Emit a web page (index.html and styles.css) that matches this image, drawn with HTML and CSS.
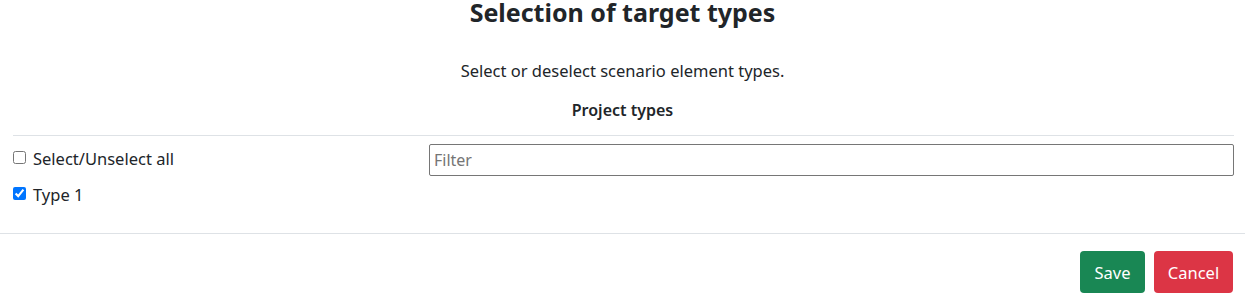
FILE: index.html
```html
<!DOCTYPE html>
<html lang="en">
<head>
<meta charset="utf-8">
<title>Selection of target types</title>
<link rel="stylesheet" href="styles.css">
</head>
<body>
<div class="modal">
  <h3 class="title">Selection of target types</h3>
  <p class="desc">Select or deselect scenario element types.</p>
  <p class="subhead">Project types</p>
  <div class="content">
    <hr class="rule">
    <div class="row">
      <div class="checks">
        <label class="check"><input type="checkbox"><span>Select/Unselect all</span></label>
        <label class="check"><input type="checkbox" checked><span>Type 1</span></label>
      </div>
      <div class="filter-col">
        <input class="filter" type="text" placeholder="Filter">
      </div>
    </div>
  </div>
  <div class="footer">
    <button class="btn btn-save" type="button">Save</button>
    <button class="btn btn-cancel" type="button">Cancel</button>
  </div>
</div>
</body>
</html>
```

FILE: styles.css
```css
html, body {
  margin: 0;
  padding: 0;
  background: #fff;
}

body {
  font-family: "Noto Sans", "Open Sans", sans-serif;
  color: #212529;
  font-size: 16.5px;
}

.title {
  margin: 0;
  font-size: 25px;
  line-height: 24px;
  font-weight: 700;
  text-align: center;
}

.desc {
  margin: 35px 0 0 0;
  font-size: 16.5px;
  line-height: 24px;
  text-align: center;
}

.subhead {
  margin: 15px 0 0 0;
  font-size: 16px;
  line-height: 24px;
  font-weight: 600;
  text-align: center;
}

.content {
  padding: 0 11px 0 13px;
}

.rule {
  margin: 13px 0 0 0;
  border: 0;
  border-top: 1px solid #dee2e6;
  height: 0;
}

.row {
  display: grid;
  grid-template-columns: 416px 1fr;
  padding-bottom: 26px;
}

.checks {
  display: flex;
  flex-direction: column;
  gap: 12px;
  padding-top: 11px;
}

.check {
  display: flex;
  align-items: flex-start;
  gap: 7px;
  line-height: 24px;
  font-size: 16.5px;
}

.check input {
  margin: 4px 0 0 0;
  width: 13px;
  height: 13px;
}

.filter-col {
  padding-top: 8px;
}

.filter {
  box-sizing: border-box;
  width: 100%;
  height: 32px;
  border: 1px solid #767676;
  border-radius: 2px;
  padding: 0 4px;
  font-family: inherit;
  font-size: 16px;
  color: #212529;
  outline: none;
}

.filter::placeholder {
  color: #757575;
}

.footer {
  border-top: 1px solid #dee2e6;
  display: flex;
  justify-content: flex-end;
  gap: 9px;
  padding: 17px 12px 0 0;
}

.btn {
  height: 42px;
  border: 0;
  border-radius: 4px;
  color: #fff;
  font-family: inherit;
  font-size: 16.5px;
  padding: 0;
  cursor: pointer;
}

.btn-save {
  width: 65px;
  background: #198754;
}

.btn-cancel {
  width: 79px;
  background: #dc3545;
}
```
